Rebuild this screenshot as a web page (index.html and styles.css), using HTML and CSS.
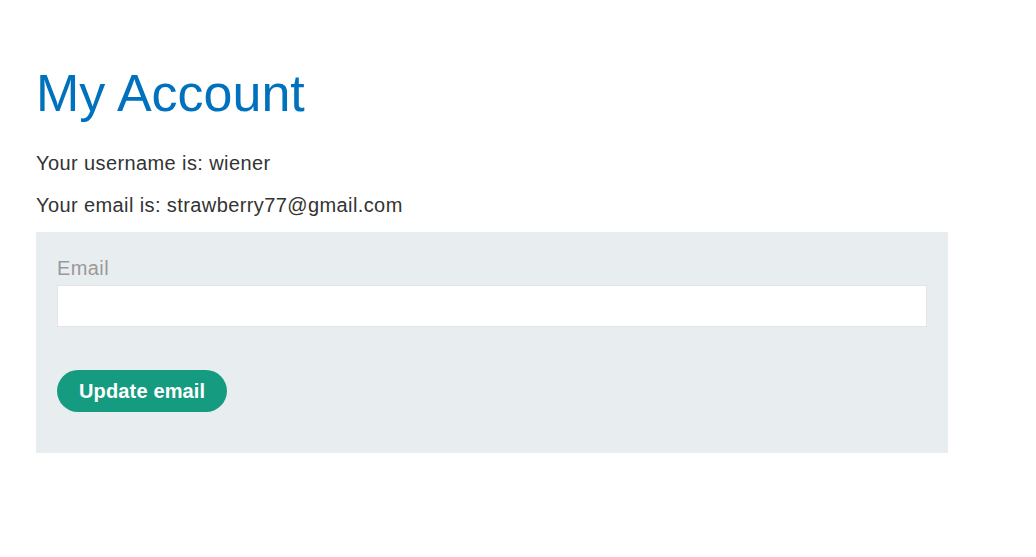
FILE: index.html
```html
<!DOCTYPE html>
<html lang="en">
<head>
<meta charset="utf-8">
<title>My Account</title>
<link rel="stylesheet" href="styles.css">
</head>
<body>
<div class="page">
  <h1 class="title">My Account</h1>
  <p class="info">Your username is: wiener</p>
  <p class="info">Your email is: strawberry77@gmail.com</p>
  <form class="panel">
    <label class="label" for="email">Email</label>
    <input class="input" id="email" type="email" name="email">
    <button class="button" type="button">Update email</button>
  </form>
</div>
</body>
</html>
```
FILE: styles.css
```css
html, body {
  margin: 0;
  padding: 0;
  background: #fff;
}
body {
  font-family: "Liberation Sans", Arial, sans-serif;
  color: #333332;
}
.page {
  padding: 63px 88px 0 36px;
}
.title {
  margin: 0 0 28px 0;
  font-size: 52px;
  line-height: 60px;
  font-weight: normal;
  color: #0071bc;
}
.info {
  margin: 0 0 18px 0;
  font-size: 20px;
  line-height: 24px;
  letter-spacing: 0.4px;
}
.info:last-of-type {
  margin-bottom: 15px;
}
.panel {
  display: flex;
  flex-direction: column;
  align-items: flex-start;
  background: #e8eef0;
  padding: 24px 21px 41px 21px;
}
.label {
  font-size: 20px;
  line-height: 24px;
  letter-spacing: 0.4px;
  color: #999;
  margin-bottom: 5px;
}
.input {
  box-sizing: border-box;
  width: 100%;
  height: 42px;
  margin: 0 0 43px 0;
  border: 1px solid #e2e4e5;
  background: #fff;
  padding: 0 10px;
  font: inherit;
  font-size: 16px;
}
.button {
  height: 42px;
  padding: 0 22px;
  border: none;
  border-radius: 21px;
  background: #159c80;
  color: #fff;
  font-family: "Liberation Sans", Arial, sans-serif;
  font-weight: bold;
  font-size: 20px;
  letter-spacing: 0.15px;
  cursor: pointer;
}
```
